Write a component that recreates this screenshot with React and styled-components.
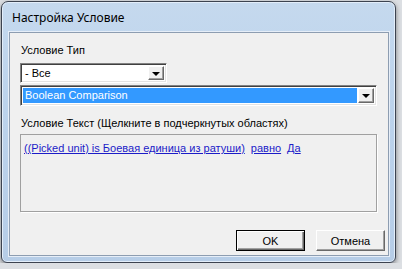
import React from 'react';
import styled, { createGlobalStyle } from 'styled-components';

const Global = createGlobalStyle`
  html, body {
    margin: 0;
    padding: 0;
    background: #dcdfe3;
  }
  #root {
    padding: 1px 0 0 1px;
  }
`;

const Window = styled.div`
  width: 395px;
  height: 262px;
  border: 1px solid #3c4350;
  border-radius: 7px 7px 6px 6px;
  background: linear-gradient(180deg, #c5d9ee 0%, #bcd3ec 40%, #b6cde7 100%);
  box-shadow: inset 0 0 0 1px #e3eefa, 0 2px 5px rgba(0, 0, 0, 0.45);
  display: flex;
  flex-direction: column;
  font-family: "Liberation Sans", Arial, sans-serif;
  box-sizing: border-box;
  overflow: hidden;
`;

const TitleBar = styled.div`
  height: 30px;
  display: flex;
  align-items: center;
  padding: 0 0 0 10px;
  font-family: "Noto Sans", "Liberation Sans", sans-serif;
  font-size: 12px;
  color: #000;
  flex-shrink: 0;
`;

const Client = styled.div`
  flex: 1;
  margin: 0 6px 6px 7px;
  border: 1px solid #8d9db1;
  box-shadow: 0 0 0 1px #e6eef8;
  background: #f0f0f0;
  padding: 10px 10px 0 10px;
  display: flex;
  flex-direction: column;
  font-size: 11px;
  color: #000;
`;

const Label = styled.div`
  height: 13px;
  line-height: 13px;
  margin: ${p => p.$top || 0}px 0 0 1px;
`;

const Combo = styled.div`
  width: ${p => p.$width}px;
  height: ${p => p.$height}px;
  margin-top: ${p => p.$top}px;
  box-sizing: border-box;
  border: 1px solid;
  border-color: #828282 #ffffff #ffffff #828282;
  box-shadow: inset 1px 1px 0 #404040, inset -1px -1px 0 #e3e3e3;
  background: #fff;
  display: flex;
  align-items: stretch;
  padding: 2px;
`;

const ComboText = styled.div`
  flex: 1;
  display: flex;
  align-items: center;
  padding-left: 2px;
  background: ${p => (p.$selected ? '#3399ff' : '#fff')};
  color: ${p => (p.$selected ? '#fff' : '#000')};
  margin-right: ${p => (p.$selected ? '1px' : '0')};
  line-height: 13px;
`;

const DropButton = styled.div`
  width: 16px;
  box-sizing: border-box;
  background: #f0f0f0;
  border: 1px solid;
  border-color: #ffffff #696969 #696969 #ffffff;
  box-shadow: inset -1px -1px 0 #a0a0a0;
  display: flex;
  align-items: center;
  justify-content: center;
`;

const Arrow = styled.span`
  width: 0;
  height: 0;
  border-left: 4px solid transparent;
  border-right: 4px solid transparent;
  border-top: 4px solid #000;
  margin-top: 1px;
`;

const TextBox = styled.div`
  width: 357px;
  height: 78px;
  margin-top: 4px;
  box-sizing: border-box;
  border: 1px solid #a0a0a0;
  box-shadow: 1px 1px 0 #ffffff;
  padding: 7px 3px;
  display: flex;
  gap: 6px;
  line-height: 13px;
`;

const LinkText = styled.a`
  color: #1c1cc8;
  text-decoration: underline;
  white-space: nowrap;
`;

const Buttons = styled.div`
  margin: auto -7px 4px 0;
  display: flex;
  justify-content: flex-end;
  gap: 11px;
`;

const Button = styled.div`
  width: 69px;
  height: 21px;
  box-sizing: border-box;
  border: 1px solid;
  border-color: ${p => (p.$default ? '#000' : '#fff #696969 #696969 #fff')};
  box-shadow: ${p =>
    p.$default
      ? 'inset 1px 1px 0 #fff, inset -1px -1px 0 #696969, inset -2px -2px 0 #a0a0a0'
      : 'inset -1px -1px 0 #a0a0a0'};
  background: #f0f0f0;
  display: flex;
  align-items: center;
  justify-content: center;
  font-size: 11px;
`;

export default function App() {
  return (
    <>
      <Global />
      <Window>
        <TitleBar>Настройка Условие</TitleBar>
        <Client>
          <Label $top={1}>Условие Тип</Label>
          <Combo $width={147} $height={20} $top={6}>
            <ComboText>- Все</ComboText>
            <DropButton><Arrow /></DropButton>
          </Combo>
          <Combo $width={357} $height={21} $top={2}>
            <ComboText $selected>Boolean Comparison</ComboText>
            <DropButton><Arrow /></DropButton>
          </Combo>
          <Label $top={11}>Условие Текст (Щелкните в подчеркнутых областях)</Label>
          <TextBox>
            <LinkText>((Picked unit) is Боевая единица из ратуши)</LinkText>
            <LinkText>равно</LinkText>
            <LinkText>Да</LinkText>
          </TextBox>
          <Buttons>
            <Button $default>OK</Button>
            <Button>Отмена</Button>
          </Buttons>
        </Client>
      </Window>
    </>
  );
}
